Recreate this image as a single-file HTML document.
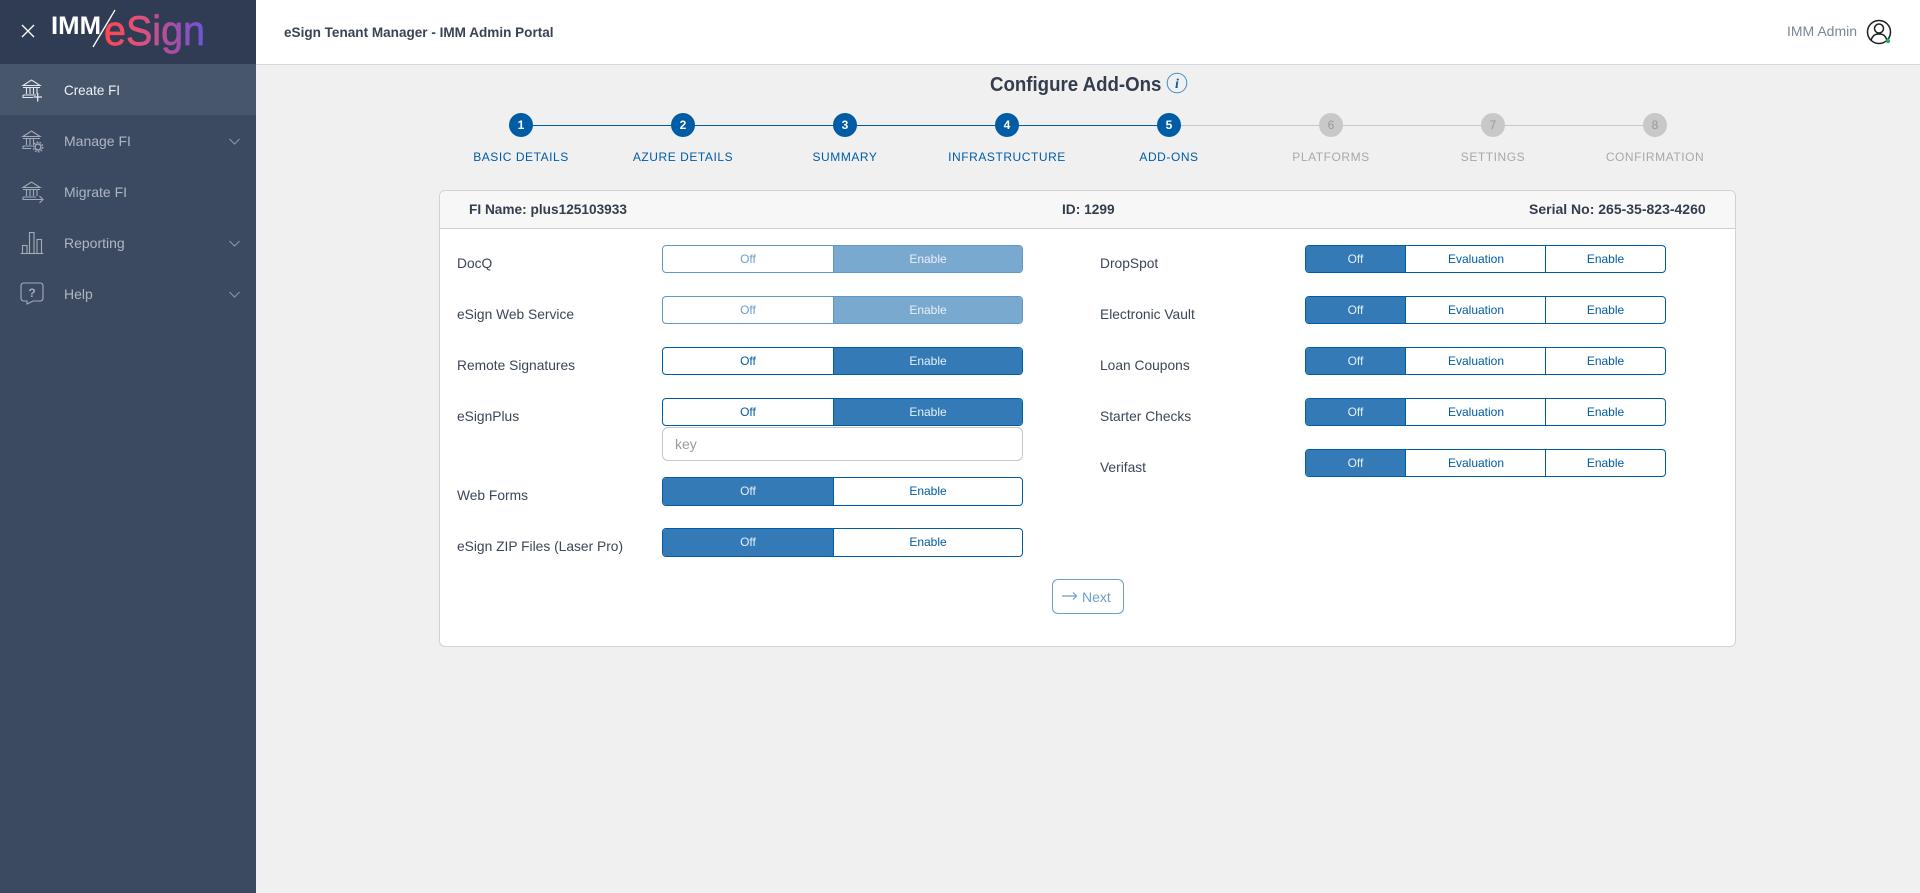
<!DOCTYPE html>
<html lang="en">
<head>
<meta charset="utf-8">
<title>eSign Tenant Manager - Configure Add-Ons</title>
<style>
html,body{margin:0;padding:0;width:1920px;height:893px;overflow:hidden;background:#f0f0f1;font-family:"Liberation Sans",Arial,sans-serif;}
#root{position:relative;width:1920px;height:893px;overflow:hidden;}
.a{position:absolute;box-sizing:border-box;}
.t{position:absolute;white-space:nowrap;line-height:20px;height:20px;transform-origin:left center;}
.lbl{font-size:14px;color:#3c4656;transform:scaleX(.985);}
.nav{font-size:14px;color:#aeb6c2;left:64px;}
.tg{position:absolute;box-sizing:border-box;border:1px solid #005ca5;border-radius:4px;background:#fff;overflow:hidden;height:28px;}
.tg.dis{border-color:#5f98c6;}
.seg{position:absolute;top:0;bottom:0;text-align:center;font-size:12px;color:#005ca5;line-height:26px;}
.seg.on{background:#337ab7;color:#e6eff7;}
.seg.b{border-left:1px solid #005ca5;}
.dis .seg{color:#6a9fcb;}
.dis .seg.on{background:#7aa9d0;color:#e8f0f7;}
.dis .seg.b{border-left-color:#5f98c6;}
.step{position:absolute;top:113px;width:24px;height:24px;border-radius:50%;background:#005ca5;color:#fff;font-size:12px;font-weight:bold;line-height:24px;text-align:center;}
.step.off{background:#c8c8c8;color:#999;font-weight:normal;}
.sl{position:absolute;top:147px;width:162px;text-align:center;font-size:12px;letter-spacing:.55px;line-height:20px;color:#005ca5;white-space:nowrap;}
.sl.off{color:#a8a8a8;}
.ln{position:absolute;top:125px;height:1px;width:162px;background:#005ca5;}
.ln.off{background:#c8c8c8;}
</style>
</head>
<body>
<div id="root">

<!-- sidebar -->
<div class="a" style="left:0;top:0;width:256px;height:893px;background:#3c4a61;"></div>
<div class="a" style="left:0;top:0;width:256px;height:64px;background:#303c53;"></div>
<div class="a" style="left:0;top:64px;width:256px;height:51px;background:#48566b;"></div>

<svg class="a" style="left:0;top:0;" width="256" height="320" viewBox="0 0 256 320">
  <defs>
    <linearGradient id="lg" gradientUnits="userSpaceOnUse" x1="104" y1="0" x2="205" y2="0">
      <stop offset="0" stop-color="#ff4750"/>
      <stop offset=".35" stop-color="#e2507a"/>
      <stop offset=".7" stop-color="#a24fa8"/>
      <stop offset="1" stop-color="#6c55da"/>
    </linearGradient>
  </defs>
  <!-- close -->
  <path d="M22 25 L34 37 M34 25 L22 37" stroke="#fff" stroke-width="1.3" fill="none"/>
  <!-- logo -->
  <text x="51" y="34" font-family="Liberation Sans" font-weight="bold" font-size="25" fill="#fff" textLength="50" lengthAdjust="spacingAndGlyphs">IMM</text>
  <path d="M93 47 L115 10" stroke="#fff" stroke-width="1.3"/>
  <text x="104" y="45" font-family="Liberation Sans" font-size="42" fill="url(#lg)" stroke="url(#lg)" stroke-width=".7" textLength="101" lengthAdjust="spacingAndGlyphs">eSign</text>

  <!-- create fi -->
  <g fill="none" stroke="#e4e8ee" stroke-width="1.1">
    <path d="M23 85.5 L31.5 80 L40 85.5 Z"/><path d="M23 87.5 H40"/>
    <path d="M26.5 88 V94 M30 88 V94 M33.5 88 V94 M37 88 V94"/>
    <path d="M23 95 H36 M23 95 V97.5 H33"/>
    <path d="M33.5 97 H42 M37.7 93 V101.5" stroke-width="1.3"/>
  </g>
  <!-- manage fi -->
  <g fill="none" stroke="#a3abb8" stroke-width="1.1">
    <path d="M23 136.5 L31.5 131 L40 136.5 Z"/><path d="M23 138.5 H40"/>
    <path d="M26.5 139 V145 M30 139 V145 M33.5 139 V145"/>
    <path d="M23 146 H32 M23 146 V148.5 H31"/>
    <circle cx="38" cy="147" r="3" stroke-width="1.4"/>
    <circle cx="38" cy="147" r="4.8" stroke-width="1.3" stroke-dasharray="1.7 1.3"/>
  </g>
  <!-- migrate fi -->
  <g fill="none" stroke="#a3abb8" stroke-width="1.1">
    <path d="M23 187.5 L31.5 182 L40 187.5 Z"/><path d="M23 189.5 H40"/>
    <path d="M26.5 190 V196 M30 190 V196 M33.5 190 V196 M37 190 V196"/>
    <path d="M23 197 H36 M23 197 V199.5 H32"/>
    <path d="M30 199.5 H43 M39.5 196 L43 199.5 L39.5 203"/>
  </g>
  <!-- reporting -->
  <g fill="none" stroke="#a3abb8" stroke-width="1.1">
    <path d="M20.5 253.5 H43.5"/>
    <rect x="22.5" y="245.5" width="4.5" height="8"/>
    <rect x="29.5" y="232.5" width="4.5" height="21"/>
    <rect x="37" y="239.5" width="4.5" height="14"/>
  </g>
  <!-- help -->
  <path d="M24 283 H40 Q43 283 43 286 V298 Q43 301 40 301 H33 L27 304 V301 H24 Q21 301 21 298 V286 Q21 283 24 283 Z" fill="none" stroke="#a3abb8" stroke-width="1.1"/>
  <text x="32" y="297" font-family="Liberation Sans" font-weight="bold" font-size="12" fill="#a3abb8" text-anchor="middle">?</text>
  <!-- chevrons -->
  <g fill="none" stroke="#8e98a7" stroke-width="1">
    <path d="M229.5 139 L234.5 144 L239.5 139"/>
    <path d="M229.5 241 L234.5 246 L239.5 241"/>
    <path d="M229.5 292 L234.5 297 L239.5 292"/>
  </g>
</svg>

<div class="t nav" style="top:80px;color:#eef1f5;transform:scaleX(.96);">Create FI</div>
<div class="t nav" style="top:131px;">Manage FI</div>
<div class="t nav" style="top:182px;">Migrate FI</div>
<div class="t nav" style="top:233px;">Reporting</div>
<div class="t nav" style="top:284px;">Help</div>

<!-- header -->
<div class="a" style="left:256px;top:0;width:1664px;height:65px;background:#fff;border-bottom:1px solid #d5d8de;"></div>
<div class="t" style="left:284px;top:22px;font-size:14px;font-weight:bold;color:#3a4352;transform:scaleX(.968);">eSign Tenant Manager - IMM Admin Portal</div>
<div class="t" style="left:1787px;top:21px;font-size:14px;color:#7d8694;">IMM Admin</div>
<svg class="a" style="left:1864px;top:17px;" width="30" height="30" viewBox="0 0 30 30">
  <circle cx="15" cy="15" r="11.5" fill="none" stroke="#1e1e1e" stroke-width="1.5"/>
  <circle cx="15" cy="11.5" r="4.5" fill="none" stroke="#1e1e1e" stroke-width="1.5"/>
  <path d="M7 23.5 C8.5 18.5 11 17 15 17 C19 17 21.5 18.5 23 23.5" fill="none" stroke="#1e1e1e" stroke-width="1.5"/>
  <circle cx="24" cy="24" r="2.2" fill="#22b35e"/>
</svg>

<!-- title -->
<div class="t" style="left:990px;top:75px;font-size:20px;font-weight:bold;color:#333d4c;transform:scaleX(.933);">Configure Add-Ons</div>
<svg class="a" style="left:1166px;top:72px;" width="22" height="22" viewBox="0 0 22 22">
  <circle cx="11" cy="11" r="9.8" fill="none" stroke="#3f8dc4" stroke-width="1"/>
  <text x="11" y="16" font-family="Liberation Serif" font-style="italic" font-weight="bold" font-size="14" fill="#005ca5" text-anchor="middle">i</text>
</svg>

<!-- stepper -->
<div class="ln" style="left:521px;"></div>
<div class="ln" style="left:683px;"></div>
<div class="ln" style="left:845px;"></div>
<div class="ln" style="left:1007px;"></div>
<div class="ln off" style="left:1169px;"></div>
<div class="ln off" style="left:1331px;"></div>
<div class="ln off" style="left:1493px;"></div>

<div class="step" style="left:509px;">1</div>
<div class="step" style="left:671px;">2</div>
<div class="step" style="left:833px;">3</div>
<div class="step" style="left:995px;">4</div>
<div class="step" style="left:1157px;">5</div>
<div class="step off" style="left:1319px;">6</div>
<div class="step off" style="left:1481px;">7</div>
<div class="step off" style="left:1643px;">8</div>

<div class="sl" style="left:440px;">BASIC DETAILS</div>
<div class="sl" style="left:602px;">AZURE DETAILS</div>
<div class="sl" style="left:764px;">SUMMARY</div>
<div class="sl" style="left:926px;">INFRASTRUCTURE</div>
<div class="sl" style="left:1088px;">ADD-ONS</div>
<div class="sl off" style="left:1250px;">PLATFORMS</div>
<div class="sl off" style="left:1412px;">SETTINGS</div>
<div class="sl off" style="left:1574px;">CONFIRMATION</div>

<!-- card -->
<div class="a" style="left:439px;top:190px;width:1297px;height:457px;background:#fff;border:1px solid #d2d2d2;border-radius:6px;"></div>
<div class="a" style="left:440px;top:191px;width:1295px;height:38px;background:#f7f7f7;border-bottom:1px solid #cfcfcf;border-radius:5px 5px 0 0;"></div>
<div class="t" style="left:469px;top:199px;font-size:14px;font-weight:bold;color:#333d4c;transform:scaleX(.976);">FI Name: plus125103933</div>
<div class="t" style="left:1062px;top:199px;font-size:14px;font-weight:bold;color:#333d4c;transform:scaleX(.98);">ID: 1299</div>
<div class="t" style="left:1529px;top:199px;font-size:14px;font-weight:bold;color:#333d4c;">Serial No: 265-35-823-4260</div>

<!-- left labels -->
<div class="t lbl" style="left:457px;top:253px;">DocQ</div>
<div class="t lbl" style="left:457px;top:304px;">eSign Web Service</div>
<div class="t lbl" style="left:457px;top:355px;">Remote Signatures</div>
<div class="t lbl" style="left:457px;top:406px;">eSignPlus</div>
<div class="t lbl" style="left:457px;top:485px;">Web Forms</div>
<div class="t lbl" style="left:457px;top:536px;">eSign ZIP Files (Laser Pro)</div>

<!-- left toggles -->
<div class="tg dis" style="left:662px;top:245px;width:361px;"><div class="seg" style="left:0;width:170px;">Off</div><div class="seg on b" style="left:170px;right:0;">Enable</div></div>
<div class="tg dis" style="left:662px;top:296px;width:361px;"><div class="seg" style="left:0;width:170px;">Off</div><div class="seg on b" style="left:170px;right:0;">Enable</div></div>
<div class="tg" style="left:662px;top:347px;width:361px;"><div class="seg" style="left:0;width:170px;">Off</div><div class="seg on b" style="left:170px;right:0;">Enable</div></div>
<div class="tg" style="left:662px;top:398px;width:361px;"><div class="seg" style="left:0;width:170px;">Off</div><div class="seg on b" style="left:170px;right:0;">Enable</div></div>
<div class="a" style="left:662px;top:427px;width:361px;height:34px;background:#fff;border:1px solid #c3c7cf;border-radius:6px;"></div>
<div class="t" style="left:675px;top:434px;font-size:14px;color:#9a9a9a;">key</div>
<div class="tg" style="left:662px;top:477px;width:361px;height:29px;"><div class="seg on" style="left:0;width:170px;">Off</div><div class="seg b" style="left:170px;right:0;">Enable</div></div>
<div class="tg" style="left:662px;top:528px;width:361px;height:29px;"><div class="seg on" style="left:0;width:170px;">Off</div><div class="seg b" style="left:170px;right:0;">Enable</div></div>

<!-- right labels -->
<div class="t lbl" style="left:1100px;top:253px;">DropSpot</div>
<div class="t lbl" style="left:1100px;top:304px;">Electronic Vault</div>
<div class="t lbl" style="left:1100px;top:355px;">Loan Coupons</div>
<div class="t lbl" style="left:1100px;top:406px;">Starter Checks</div>
<div class="t lbl" style="left:1100px;top:457px;">Verifast</div>

<!-- right toggles -->
<div class="tg" style="left:1305px;top:245px;width:361px;"><div class="seg on" style="left:0;width:99px;">Off</div><div class="seg b" style="left:99px;width:140px;">Evaluation</div><div class="seg b" style="left:239px;right:0;">Enable</div></div>
<div class="tg" style="left:1305px;top:296px;width:361px;"><div class="seg on" style="left:0;width:99px;">Off</div><div class="seg b" style="left:99px;width:140px;">Evaluation</div><div class="seg b" style="left:239px;right:0;">Enable</div></div>
<div class="tg" style="left:1305px;top:347px;width:361px;"><div class="seg on" style="left:0;width:99px;">Off</div><div class="seg b" style="left:99px;width:140px;">Evaluation</div><div class="seg b" style="left:239px;right:0;">Enable</div></div>
<div class="tg" style="left:1305px;top:398px;width:361px;"><div class="seg on" style="left:0;width:99px;">Off</div><div class="seg b" style="left:99px;width:140px;">Evaluation</div><div class="seg b" style="left:239px;right:0;">Enable</div></div>
<div class="tg" style="left:1305px;top:449px;width:361px;"><div class="seg on" style="left:0;width:99px;">Off</div><div class="seg b" style="left:99px;width:140px;">Evaluation</div><div class="seg b" style="left:239px;right:0;">Enable</div></div>

<!-- next -->
<div class="a" style="left:1052px;top:579px;width:72px;height:35px;border:1px solid #6a9fcb;border-radius:6px;background:#fff;"></div>
<svg class="a" style="left:1060px;top:588px;" width="20" height="16" viewBox="0 0 20 16">
  <path d="M2 8 H16.5 M13 4.5 L16.5 8 L13 11.5" fill="none" stroke="#6a9fcb" stroke-width="1.2"/>
</svg>
<div class="t" style="left:1082px;top:587px;font-size:14px;color:#6a9fcb;">Next</div>

</div>
</body>
</html>
